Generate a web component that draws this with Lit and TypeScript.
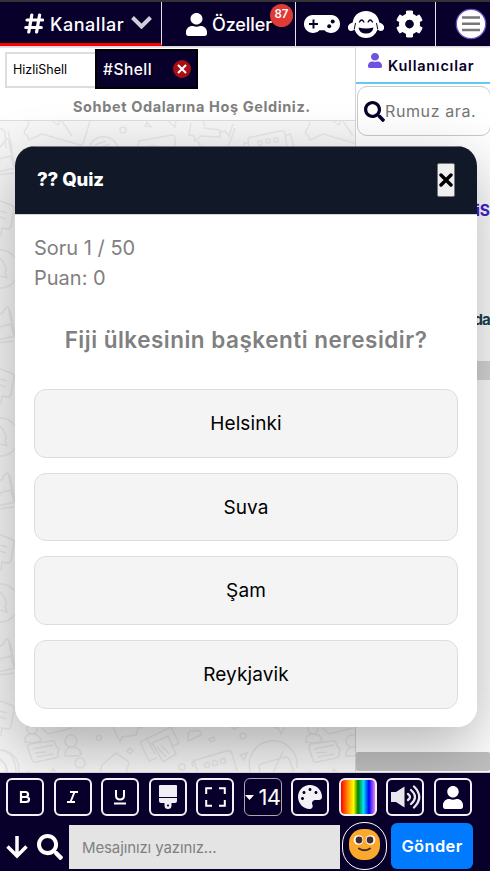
import { LitElement, html, css, svg } from "lit";
import { customElement, state } from "lit/decorators.js";

const USER = "M224 256c70.7 0 128-57.3 128-128S294.7 0 224 0 96 57.3 96 128s57.3 128 128 128zm89.6 32h-16.7c-22.2 10.2-46.9 16-72.9 16s-50.6-5.8-72.9-16h-16.7C60.2 288 0 348.2 0 422.4V464c0 26.5 21.5 48 48 48h352c26.5 0 48-21.5 48-48v-41.6c0-74.2-60.2-134.4-134.4-134.4z";
const SEARCH = "M505 442.7L405.3 343c-4.5-4.5-10.6-7-17-7H372c27.6-35.3 44-79.7 44-128C416 93.1 322.9 0 208 0S0 93.1 0 208s93.1 208 208 208c48.3 0 92.7-16.4 128-44v16.3c0 6.4 2.5 12.5 7 17l99.7 99.7c9.4 9.4 24.6 9.4 33.9 0l28.3-28.3c9.4-9.4 9.4-24.6.1-34zM208 336c-70.7 0-128-57.2-128-128 0-70.7 57.2-128 128-128 70.7 0 128 57.2 128 128 0 70.7-57.2 128-128 128z";
const GEAR = "M487.4 315.7l-42.6-24.6c4.3-23.2 4.3-47 0-70.2l42.6-24.6c4.9-2.8 7.1-8.6 5.5-14-11.1-35.6-30-67.8-54.7-94.6-3.8-4.1-10-5.1-14.8-2.3L380.8 110c-17.9-15.4-38.5-27.3-60.8-35.1V25.8c0-5.6-3.9-10.5-9.4-11.7-36.7-8.2-74.3-7.8-109.2 0-5.5 1.2-9.4 6.1-9.4 11.7V75c-22.2 7.9-42.8 19.8-60.8 35.1L88.7 85.5c-4.9-2.8-11-1.9-14.8 2.3-24.7 26.7-43.6 58.9-54.7 94.6-1.7 5.4.6 11.2 5.5 14L67.3 221c-4.3 23.2-4.3 47 0 70.2l-42.6 24.6c-4.9 2.8-7.1 8.6-5.5 14 11.1 35.6 30 67.8 54.7 94.6 3.8 4.1 10 5.1 14.8 2.3l42.6-24.6c17.9 15.4 38.5 27.3 60.8 35.1v49.2c0 5.6 3.9 10.5 9.4 11.7 36.7 8.2 74.3 7.8 109.2 0 5.5-1.2 9.4-6.1 9.4-11.7v-49.2c22.2-7.9 42.8-19.8 60.8-35.1l42.6 24.6c4.9 2.8 11 1.9 14.8-2.3 24.7-26.7 43.6-58.9 54.7-94.6 1.5-5.5-.7-11.3-5.6-14.1zM256 336c-44.1 0-80-35.9-80-80s35.9-80 80-80 80 35.9 80 80-35.9 80-80 80z";
const PALETTE = "M204.3 5C104.9 24.4 24.8 104.3 5.2 203.4c-37 187 131.7 326.4 258.8 306.7 41.2-6.4 61.4-54.6 42.5-91.7-23.1-45.4 9.9-98.4 60.9-98.4h79.7c35.8 0 64.8-29.6 64.9-65.3C511.5 97.1 368.1-26.9 204.3 5zM96 320c-17.7 0-32-14.3-32-32s14.3-32 32-32 32 14.3 32 32-14.3 32-32 32zm32-128c-17.7 0-32-14.3-32-32s14.3-32 32-32 32 14.3 32 32-14.3 32-32 32zm128-64c-17.7 0-32-14.3-32-32s14.3-32 32-32 32 14.3 32 32-14.3 32-32 32zm128 64c-17.7 0-32-14.3-32-32s14.3-32 32-32 32 14.3 32 32-14.3 32-32 32z";

const userIcon = (w: number, h: number) => html`<svg width=${w} height=${h} viewBox="0 0 448 512" preserveAspectRatio="none"><path fill="currentColor" d=${USER} /></svg>`;
const searchIcon = (s: number) => html`<svg width=${s} height=${s} viewBox="0 0 512 512"><path fill="currentColor" d=${SEARCH} /></svg>`;

/* Line drawings behind the chat messages: a top band, a left band that repeats, and a bottom band. */
const topBand = (x: number) => svg`<g transform="translate(${x} 0)">
  <path d="M28 0q2 3-2 8q-4 5 1 6l2 5l13-6l38 11q3 0 4-4l6-20M52 0l6 4l2-4M62 0l10 15"/></g>`;
const leftTile = (y: number) => svg`<g transform="translate(0 ${y})">
  <path d="M-2 2q4 0 6-5q4-6 5 0l2 10q3 1 0 4l-8 2q-4 0-3 4M10 -3l5 26l-17 4M11 12l3 10M-2 30l16-2M-2 55l13 5q4 1 3 5l-3 16q0 3-4 3l-5-1l-1 7l-3 3M0 66l7 2M0 72l6 2M0 105a19 19 0 0 1 0 38M0 113l4 5q4 8 1 9l2 6l-7-2"/></g>`;
const people = (x: number) => svg`<g transform="translate(${x} 0)">
  <circle cx="32" cy="608" r="5"/><path d="M25 621q-1-8 7-8q8 0 9 7l-8 2zM42 607l6 6l24-6M30 623q-3 1-2 4l4 12q1 3 4 2l19-4q4-1 3-5l1-4l-3-3l-1-3q-1-3-4-2zM33 628l20-4M35 632l11-1M37 636l16-3"/>
  <circle cx="71" cy="620" r="6"/><path d="M65 635q0-9 7-9q8 0 9 7q0 2-4 2zM26 652l4-1M28 650v4M50 653l3-5l4 5z"/></g>`;

const doodles = svg`
  ${topBand(0)}${topBand(281)}
  <path d="M-2 8q5-1 7 3l1 16M8 10l4 17M89 27a15 15 0 0 1 29 0M95 24l11-4M98 27l12-4M137 27l2-7l33-6q3 0 3 4v8M145 27q8-5 15 0M145 5l2-4l4 5zM168 0l7 6l1-6"/>
  <circle cx="123" cy="9" r="3"/>
  <path d="M191 2l-2 12l5 1l1 5l6-5l19 1l0-7l-16-2M203 0l2 5M219 12l6-2l4 5l4-12M227 27l3-6l5-14M201 27l-3-7M249 27l-1-8q0-3 4-3l28-6q4-1 5 3l2 14M286 14l4-1l4 13M245 27l-1-5h4"/>
  <circle cx="260" cy="22" r="2.2"/><circle cx="268" cy="20" r="2.2"/><circle cx="276" cy="19" r="2.2"/>
  ${[24, 192, 358, 524].map(leftTile)}
  ${people(0)}${people(281)}
  <circle cx="99" cy="617" r="2.5"/><circle cx="80" cy="642" r="5"/>
  <path d="M113 606l7 15l2-5l14-2l2-7l10-4M127 630l3-3l3 3l-3 3zM100 651l2-7l14-12l13 9l-3 11M140 621l31-15l8 16l-8 4M140 621l9 19l8-3M147 618l8 15M152 622l16-7l8 18l-13 8zM157 626l9 10M161 624l8 9"/>
  <path d="M187 605q-2-5 4-7M188 620q-1-12 6-10q8-2 7 4zM209 618l5-2l1 3l-4 2zM193 646q-3-6 3-7l30-9q5-1 6 3l5 17M193 638l5 14M240 634l7-2l-3 7z"/>
  <circle cx="182" cy="646" r="3"/><circle cx="207" cy="644" r="2.6"/><circle cx="215" cy="642" r="2.6"/><circle cx="223" cy="640" r="2.6"/><circle cx="243" cy="615" r="3"/>
  <path d="M230 605l4 3l10-4M267 603l12 5l2 5l4-7M251 653a24 24 0 1 1 46-6M260 652l-1-7q1-3 5-3l21-6q4 0 5 4l4 12M283 630l-10 22"/>
  <path d="M-2 629q16 0 18 20v3M-2 637l7 6q5 8 0 9"/>`;

@customElement("app-root")
export class AppRoot extends LitElement {
  @state() private answers = ["Helsinki", "Suva", "Şam", "Reykjavik"];

  static styles = css`
    :host { display: flex; flex-direction: column; position: relative; width: 490px; height: 871px; overflow: hidden; background: #fff; font-family: Inter, "Noto Sans", sans-serif; color: #000; }
    * { box-sizing: border-box; }
    svg { display: block; flex: none; }
    button { font-family: inherit; padding: 0; margin: 0; }
    .top { height: 47px; flex: none; display: grid; grid-template-columns: 162px 134px 140px 54px; background: #08002a; border-top: 2px solid #343338; border-bottom: 1px solid #d8d8dc; color: #fff; }
    .cell { display: flex; align-items: center; border-right: 1px solid #e4e2ea; position: relative; }
    .cell:last-child { border: 0; }
    .chan { padding: 2px 0 0 24px; border-bottom: 3px solid #f00; font-size: 18px; font-weight: 500; letter-spacing: .55px; }
    .chan .label { width: 87px; padding: 1px 0 0 6px; }
    .chevron { margin-top: -3px; }
    .priv { padding-left: 24px; gap: 5px; font-size: 18px; font-weight: 500; letter-spacing: -.1px; }
    .badge { position: absolute; left: 108px; top: 2px; width: 23px; height: 23px; border-radius: 50%; background: #df3a35; font-size: 11.5px; font-weight: 600; line-height: 21px; text-align: center; letter-spacing: 0; }
    .tools { padding-left: 8px; gap: 8px; }
    .menu { padding-left: 19px; }
    .middle { flex: 1; display: grid; grid-template-columns: 356px 134px; min-height: 0; }
    .chat { border-right: 1px solid #d6d6d6; display: flex; flex-direction: column; min-width: 0; min-height: 0; }
    .head { height: 74px; border-top: 1px solid #e5e5e5; border-bottom: 1px solid #ddd; padding: 1px 0 0 5px; flex: none; }
    .tabs { display: flex; height: 40px; align-items: center; }
    .tab1 { width: 90px; height: 36px; margin-top: 2px; border: 2px solid #ddd; border-right: 0; background: #fff; font-size: 12.5px; line-height: 31px; padding-left: 6px; }
    .tab2 { width: 103px; height: 40px; border: 2px solid #000; background: #08002a; color: #fff; display: flex; align-items: center; justify-content: space-between; padding: 0 5px 0 6px; font-size: 15.5px; font-weight: 500; letter-spacing: .5px; }
    .welcome { margin: 8px 0 0 68px; color: #808080; font-size: 14.5px; font-weight: 700; letter-spacing: .6px; line-height: 20px; white-space: nowrap; }
    .doodle { flex: 1; background: #f7f7f7; overflow: hidden; }
    .doodle svg { fill: none; stroke: #e8e8e8; stroke-width: 1.5; }
    .side { overflow: hidden; display: flex; flex-direction: column; border-top: 1px solid #eee; }
    .people { height: 36px; border-bottom: 2px solid #62c8f5; display: flex; padding: 5px 0 0 12px; gap: 6px; color: #7052e0; flex: none; }
    .people span { color: #08002a; font-size: 14.5px; font-weight: 600; line-height: 25px; letter-spacing: .75px; }
    .find { width: 134px; height: 50px; margin: 2px 0 0 1px; border: 1px solid #c9c9c9; border-radius: 10px; display: flex; align-items: center; padding-left: 6px; color: #08002a; flex: none; }
    .find span { color: #757575; font-size: 16px; letter-spacing: .6px; white-space: nowrap; }
    .nick { font-weight: 700; line-height: 24px; white-space: nowrap; flex: none; text-align: right; }
    .n1 { margin-top: 63px; color: #4020d0; font-size: 15.5px; }
    .n2 { margin-top: 85px; color: #17424c; font-size: 15px; letter-spacing: -.8px; }
    .band { height: 19px; background: #d9d9d9; margin-top: 29px; flex: none; }
    .thumb { height: 19px; background: #c1c1c1; border-radius: 2px; margin-top: auto; margin-bottom: 1px; flex: none; }
    .foot { height: 99px; flex: none; background: #08002a; border-top: 1px solid #d0d0d0; color: #fff; position: relative; }
    .row { display: flex; gap: 9.5px; padding: 5px 0 0 6px; height: 49px; }
    .sq { width: 38px; height: 38px; border: 2px solid #f3f1f6; border-radius: 6px; background: transparent; color: #fff; display: flex; align-items: center; justify-content: center; overflow: hidden; }
    .size { border-width: 1px; border-color: #aaa; font-size: 22px; gap: 5px; justify-content: flex-start; letter-spacing: -.8px; }
    .rainbow { background: linear-gradient(90deg, #f00, #ff9100 20%, #ff0 37%, #008000 50%, #00e5ee 66%, #00f 82%, #ee82ee); }
    .send { display: flex; align-items: center; height: 49px; padding-left: 6px; }
    .find-message { margin-left: 9px; }
    .msg { width: 271px; height: 44px; flex: none; background: #e4e4e4; color: #808080; font-size: 15px; letter-spacing: -.12px; line-height: 45px; padding-left: 13px; margin-left: 6px; }
    .emoji { width: 45px; height: 48px; flex: none; border: 1px solid #fff; border-radius: 22px; margin: -2px 0 0 2px; display: flex; align-items: center; justify-content: center; padding-bottom: 2px; }
    .go { width: 82px; height: 46px; flex: none; margin: -2px 0 0 4px; border: 0; border-radius: 6px; background: #007bff; color: #fff; font-size: 16.5px; letter-spacing: .35px; font-weight: 600; }
    .modal, .shade { position: absolute; left: 15px; top: 146px; width: 462px; height: 581px; border-radius: 20px; }
    .modal { background: #fff; overflow: hidden; }
    .shade { box-shadow: 0 20px 60px rgba(0, 0, 0, .3); }
    .title { height: 69px; background: #111827; border-top: 1px solid #777b85; border-bottom: 1px solid #d4d5d8; display: flex; align-items: center; justify-content: space-between; padding: 0 22px 1px; color: #fff; font-size: 18.5px; font-weight: 800; letter-spacing: -.1px; }
    .title span { margin-top: -2px; }
    .close { width: 18px; height: 34px; border: 1px solid #777; border-radius: 2px; background: #efefef; display: flex; align-items: center; justify-content: center; }
    .body { padding: 18px 19px; color: #808080; font-size: 20px; line-height: 30px; }
    .question { margin: 32px 0 34px; text-align: center; font-size: 22.5px; font-weight: 600; letter-spacing: .5px; white-space: nowrap; }
    .answers { display: grid; gap: 15px; }
    .answer { height: 68.7px; border: 1px solid #ddd; border-radius: 12px; background: #f4f4f4; color: #000; font-size: 19px; letter-spacing: .1px; }
  `;

  render() {
    return html`
      <header class="top">
        <div class="cell chan">
          <svg width="20" height="21" viewBox="0 0 20 21" fill="none" stroke="#fff" stroke-width="3.2" stroke-linecap="round"><path d="M3 7h15.5M1.8 14.5h15.5M7.8 2L4.8 19M15.6 2l-3 17" /></svg>
          <span class="label">Kanallar</span>
          <svg class="chevron" width="21" height="13" viewBox="0 0 21 13" fill="none" stroke="#d0ced8" stroke-width="4"><path d="M1.5 1.5l9 9l9-9" /></svg>
        </div>
        <div class="cell priv">${userIcon(21, 23)}<span>Özeller</span><span class="badge">87</span></div>
        <div class="cell tools">
          <svg width="36" height="18" viewBox="0 0 36 18"><path fill="#fff" d="M9 0h18a9 9 0 1 1-6.500 15.200h-5A9 9 0 1 1 9 0z" /><path d="M9.500 4.500v9M5 9h9" stroke="#08002a" stroke-width="2" /><circle cx="28.700" cy="6.500" r="2" fill="#08002a" /><circle cx="25.200" cy="11.300" r="2" fill="#08002a" /></svg>
          <svg width="36" height="27" viewBox="0 0 36 27"><path fill="#fff" d="M18 0C10.500 0 5.400 5 4.700 11.500Q0 13-.2 16.500Q0 20 3.200 20Q5.500 19.800 6.300 18.300Q9.500 27 18 27T29.700 18.300Q30.500 19.800 32.800 20Q36 20 36.200 16.500Q36 13 31.300 11.500C30.600 5 25.500 0 18 0z" /><path d="M7.500 12l-1.200 6M28.500 12l1.200 6" stroke="#08002a" stroke-width="1" /><path d="M11.500 11q2.200-4 4.400 0M20.100 11q2.200-4 4.400 0" fill="none" stroke="#08002a" stroke-width="1.300" stroke-linecap="round" /><path d="M10.500 16.500q7.500 2 15 0q-.8 6-7.500 6t-7.500-6z" fill="#08002a" /></svg>
          <svg width="35" height="28" viewBox="0 0 512 512"><path fill="#fff" d=${GEAR} /></svg>
        </div>
        <div class="cell menu"><svg width="32" height="32" viewBox="0 0 32 32"><circle cx="16" cy="16" r="14.700" fill="#fff" stroke="#6a50c8" stroke-width="1.300" /><path d="M7 9.500h18M7 15.800h18M7 22h18" stroke="#777" stroke-width="2.500" /></svg></div>
      </header>
      <main class="middle">
        <section class="chat">
          <div class="head">
            <div class="tabs">
              <div class="tab1">HizliShell</div>
              <div class="tab2"><span>#Shell</span><svg width="18" height="18" viewBox="0 0 18 18"><circle cx="9" cy="9" r="9" fill="#a80f14" /><path d="M5 5l8 8M13 5l-8 8" stroke="#fff" stroke-width="2" /></svg></div>
            </div>
            <div class="welcome">Sohbet Odalarına Hoş Geldiniz.</div>
          </div>
          <div class="doodle"><svg width="355" height="651" viewBox="0 0 355 651">${doodles}</svg></div>
        </section>
        <aside class="side">
          <div class="people">${userIcon(14, 15)}<span>Kullanıcılar</span></div>
          <div class="find">${searchIcon(21)}<span>Rumuz ara.</span></div>
          <div class="nick n1">iS</div>
          <div class="nick n2">da</div>
          <div class="band"></div>
          <div class="thumb"></div>
        </aside>
      </main>
      <div class="shade"></div>
      <footer class="foot">
        <div class="row">
          <button class="sq"><svg width="12" height="14" viewBox="0 0 12 14" fill="none" stroke="#fff" stroke-width="2.200"><path d="M2 2h4.500q2.500 0 2.500 2.500T6.500 7H2h5q3 0 3 2.500T7 12H2zV12" /></svg></button>
          <button class="sq"><svg width="13" height="14" viewBox="0 0 13 14" fill="none" stroke="#fff" stroke-width="2"><path d="M4 2h8M1 12h8M8.500 2l-4 10" /></svg></button>
          <button class="sq"><svg width="14" height="16" viewBox="0 0 14 16" fill="none" stroke="#fff" stroke-width="2"><path d="M3 1v5.500q0 4 4 4t4-4V1M1 14.500h12" /></svg></button>
          <button class="sq"><svg width="20" height="26" viewBox="0 0 20 26"><path fill="#f1eff5" d="M2 1h16q1 0 1 1v11H1V2q0-1 1-1zM1 14h18V17q0 2-2 2h-3.500v2.500a3.500 3.500 0 0 1-7 0V19H3q-2 0-2-2z" /><circle cx="10" cy="21.500" r="1.100" fill="#08002a" /></svg></button>
          <button class="sq"><svg width="21" height="20" viewBox="0 0 21 20" fill="none" stroke="#fff" stroke-width="2"><path d="M1.200 7V1.200H7M14 1.200h5.800V7M19.800 13v5.800H14M7 18.800H1.200V13" /></svg></button>
          <button class="sq size"><svg width="9" height="5" viewBox="0 0 9 5"><path d="M0 0h9L4.500 5z" fill="#fff" /></svg><span>14</span></button>
          <button class="sq"><svg width="24" height="24" viewBox="0 0 512 512"><path fill="#f3f1f6" d=${PALETTE} /></svg></button>
          <button class="sq rainbow"></button>
          <button class="sq"><svg width="32" height="26" viewBox="0 0 32 26" fill="none" stroke="#e8e6ec" stroke-width="2.300" stroke-linecap="round"><path fill="#e8e6ec" stroke="none" d="M2 8h5l8.500-5.500v21L7 18H2z" /><path d="M19 10q4 3 0 6M22 6q8 7 0 14M25 2.500q10.500 10.500 0 21" /></svg></button>
          <button class="sq">${userIcon(20, 23)}</button>
        </div>
        <div class="send">
          <svg width="22" height="24" viewBox="0 0 22 24" fill="none" stroke="#fff" stroke-width="3.500"><path d="M11 1v20M1.500 11.500l9.500 9.500l9.500-9.500" /></svg>
          <div class="find-message">${searchIcon(26)}</div>
          <div class="msg">Mesajınızı yazınız...</div>
          <div class="emoji"><svg width="31" height="31" viewBox="0 0 31 31"><rect width="31" height="31" rx="14" fill="#fba92c" /><circle cx="9.500" cy="11" r="4.800" fill="#fff" /><circle cx="21.500" cy="11" r="4.800" fill="#fff" /><circle cx="10" cy="11" r="3.400" fill="#422b31" /><circle cx="21" cy="11" r="3.400" fill="#422b31" /><path d="M10 19.500q5.500 3.500 11 0" fill="none" stroke="#422b31" stroke-width="2" stroke-linecap="round" /></svg></div>
          <button class="go">Gönder</button>
        </div>
      </footer>
      <div class="modal">
        <div class="title"><span>?? Quiz</span><button class="close"><svg width="14" height="14" viewBox="0 0 14 14" stroke="#000" stroke-width="3.400" stroke-linecap="round"><path d="M2 2l10 10M12 2L2 12" /></svg></button></div>
        <div class="body">
          <div>Soru 1 / 50</div>
          <div>Puan: 0</div>
          <div class="question">Fiji ülkesinin başkenti neresidir?</div>
          <div class="answers">${this.answers.map((a) => html`<button class="answer">${a}</button>`)}</div>
        </div>
      </div>
    `;
  }
}
